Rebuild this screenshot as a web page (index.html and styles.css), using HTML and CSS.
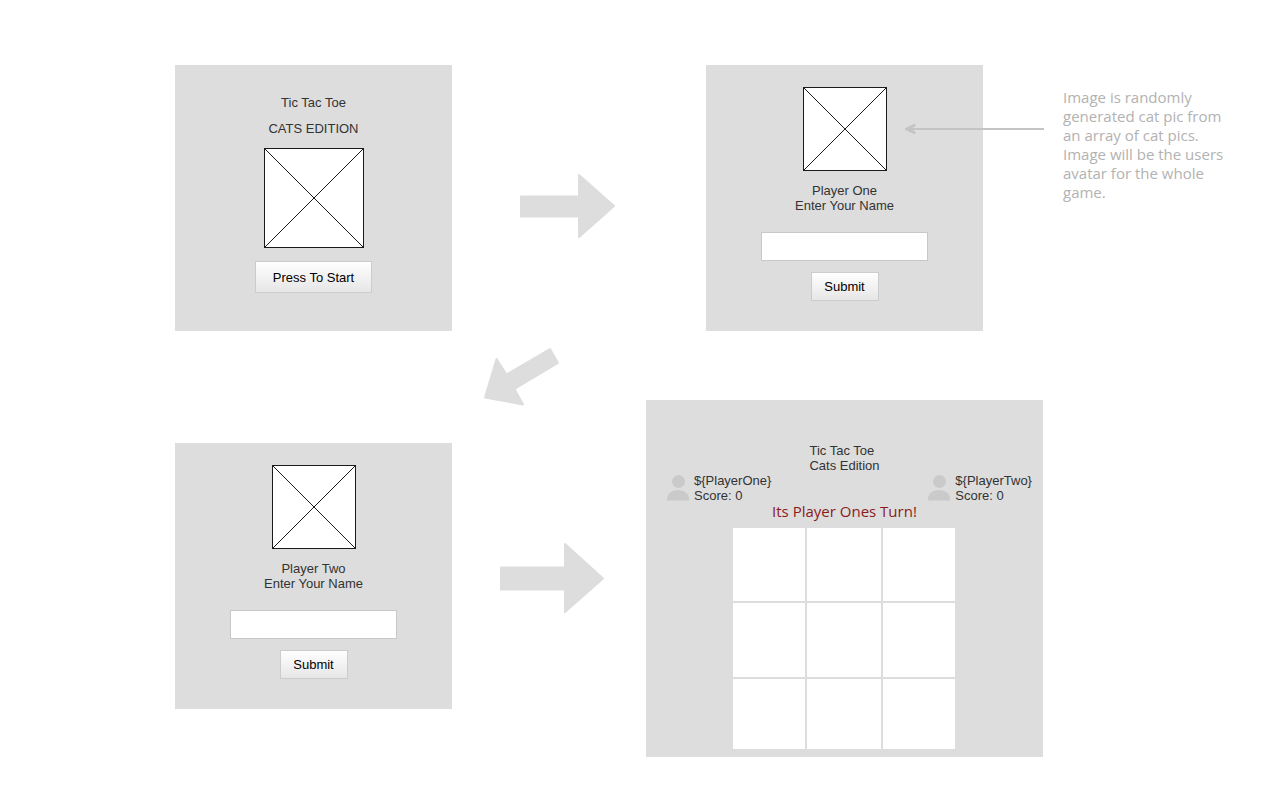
FILE: index.html
```html
<!DOCTYPE html>
<html lang="en">
<head>
<meta charset="utf-8">
<meta name="viewport" content="width=device-width, initial-scale=1">
<title>Tic Tac Toe Cats Edition</title>
<link rel="stylesheet" href="styles.css">
</head>
<body>
<main class="canvas">
  <section class="card node-start">
    <h1 class="label">Tic Tac Toe</h1>
    <p class="label edition">CATS EDITION</p>
    <svg class="picture picture-large" viewBox="0 0 100 100" aria-hidden="true"><rect x=".5" y=".5" width="99" height="99"/><path d="M.5.5l99 99M99.500.5l-99 99"/></svg>
    <button class="button button-large" type="button">Press To Start</button>
  </section>

  <svg class="arrow arrow-first" width="96" height="64" viewBox="0 0 96 64" aria-hidden="true"><path d="M1 22.500H59V1L94 32L59 63V42.500H1Z"/></svg>

  <form class="card node-one">
    <svg class="picture" viewBox="0 0 84 84" aria-hidden="true"><rect x=".5" y=".5" width="83" height="83"/><path d="M.5.5l83 83M83.500.5l-83 83"/></svg>
    <label class="label prompt" for="name-one">Player One<br>Enter Your Name</label>
    <input class="field" id="name-one" type="text">
    <button class="button" type="button">Submit</button>
  </form>

  <svg class="pointer" width="139" height="12" viewBox="0 0 139 12" aria-hidden="true"><path d="M2 6H139"/><path class="pointer-head" d="M9 2.500L2 6L9 9.500"/></svg>
  <p class="note">Image is randomly generated cat pic from an array of cat pics. Image will be the users avatar for the whole game.</p>

  <svg class="arrow arrow-back" width="77" height="60" viewBox="0 0 77 60" aria-hidden="true"><path d="M67 2L75 16L31.500 42L40 57.500L2 50.500L13.500 12L23.500 27.500Z"/></svg>

  <form class="card node-two">
    <svg class="picture" viewBox="0 0 84 84" aria-hidden="true"><rect x=".5" y=".5" width="83" height="83"/><path d="M.5.5l83 83M83.500.5l-83 83"/></svg>
    <label class="label prompt" for="name-two">Player Two<br>Enter Your Name</label>
    <input class="field" id="name-two" type="text">
    <button class="button" type="button">Submit</button>
  </form>

  <svg class="arrow arrow-last" width="105" height="70" viewBox="0 0 105 70" aria-hidden="true"><path d="M1 24.500H65V1L103 35.500L65 69V46.500H1Z"/></svg>

  <section class="card node-game">
    <h2 class="label">Tic Tac Toe<br>Cats Edition</h2>
    <div class="players">
      <div class="player">
        <svg class="avatar" viewBox="0 0 22 26" aria-hidden="true"><circle cx="11.500" cy="6.500" r="6.500"/><path d="M0 25.500V23C1 18 5 15 11 15S21 18 22 23V25.500Z"/></svg>
        <p class="label">${PlayerOne}<br>Score: 0</p>
      </div>
      <div class="player">
        <svg class="avatar" viewBox="0 0 22 26" aria-hidden="true"><circle cx="11.500" cy="6.500" r="6.500"/><path d="M0 25.500V23C1 18 5 15 11 15S21 18 22 23V25.500Z"/></svg>
        <p class="label">${PlayerTwo}<br>Score: 0</p>
      </div>
    </div>
    <p class="turn">Its Player Ones Turn!</p>
    <div class="board">
      <button class="cell" type="button" aria-label="Top left"></button>
      <button class="cell" type="button" aria-label="Top middle"></button>
      <button class="cell" type="button" aria-label="Top right"></button>
      <button class="cell" type="button" aria-label="Middle left"></button>
      <button class="cell" type="button" aria-label="Center"></button>
      <button class="cell" type="button" aria-label="Middle right"></button>
      <button class="cell" type="button" aria-label="Bottom left"></button>
      <button class="cell" type="button" aria-label="Bottom middle"></button>
      <button class="cell" type="button" aria-label="Bottom right"></button>
    </div>
  </section>
</main>
</body>
</html>
```

FILE: styles.css
```css
* { box-sizing: border-box; }

body {
  margin: 0;
  background: #fff;
  color: #333;
  font: 13px/15px "Liberation Sans", Arial, sans-serif;
}

h1, h2, p { margin: 0; }

/* Free canvas: the screens and arrows of the flow diagram are placed on it. */
.canvas {
  position: relative;
  min-height: 100vh;
}

.card, .arrow, .pointer, .note { position: absolute; }

.node-start { left: 175px; top: 65px; padding: 30px 80px 38px; }
.node-one { left: 706px; top: 65px; }
.node-two { left: 175px; top: 443px; }
.node-game { left: 646px; top: 400px; padding: 43px 0 8px; }
.arrow-first { left: 520px; top: 174px; }
.arrow-back { left: 483px; top: 347px; }
.arrow-last { left: 500px; top: 543px; }
.pointer { left: 905px; top: 123px; }
.note { left: 1063px; top: 88px; width: 168px; }

.card {
  display: flex;
  flex-direction: column;
  align-items: center;
  background: #ddd;
}

.node-one, .node-two { padding: 22px 55px 30px; }

.label {
  font-size: 13px;
  font-weight: 400;
  line-height: 15px;
}

.edition { margin: 11px 0 12px; }

.picture {
  display: block;
  width: 84px;
  height: 84px;
  fill: #fff;
  stroke: #1a1a1a;
  stroke-width: 1;
}

.picture-large { width: 100px; height: 100px; }

.prompt {
  margin: 12px 0 19px;
  text-align: center;
}

.field {
  width: 167px;
  height: 29px;
  padding: 0 8px;
  border: 1px solid #c8c8c8;
  background: #fff;
  font: inherit;
}

.button {
  min-width: 68px;
  height: 29px;
  margin-top: 11px;
  padding: 0 12px;
  border: 1px solid #ccc;
  background: linear-gradient(#fff, #e6e6e6);
  color: #000;
  font: inherit;
}

.button-large {
  min-width: 117px;
  height: 32px;
  margin-top: 13px;
}

.arrow {
  fill: #ddd;
  stroke: #ddd;
  stroke-width: 2;
  stroke-linejoin: round;
}

.pointer {
  fill: none;
  stroke: #c4c4c4;
  stroke-width: 2;
}

.pointer-head {
  stroke-width: 3;
  stroke-linecap: round;
}

.note {
  color: #b2b2b2;
  font: 15px/19px "Open Sans", sans-serif;
}

.players {
  display: flex;
  gap: 157px;
  padding: 0 11px 0 21px;
}

.player {
  display: flex;
  align-items: center;
  gap: 5px;
}

.avatar {
  width: 22px;
  height: 26px;
  fill: #cacaca;
}

.turn {
  margin-bottom: 8px;
  color: #8b1a1a;
  font: 15px/17px "Open Sans", sans-serif;
}

.board {
  display: grid;
  grid-template-columns: 72px 74px 72px;
  grid-template-rows: 73px 74px 70px;
  gap: 2px;
}

.cell {
  padding: 0;
  border: 0;
  background: #fff;
}
```
